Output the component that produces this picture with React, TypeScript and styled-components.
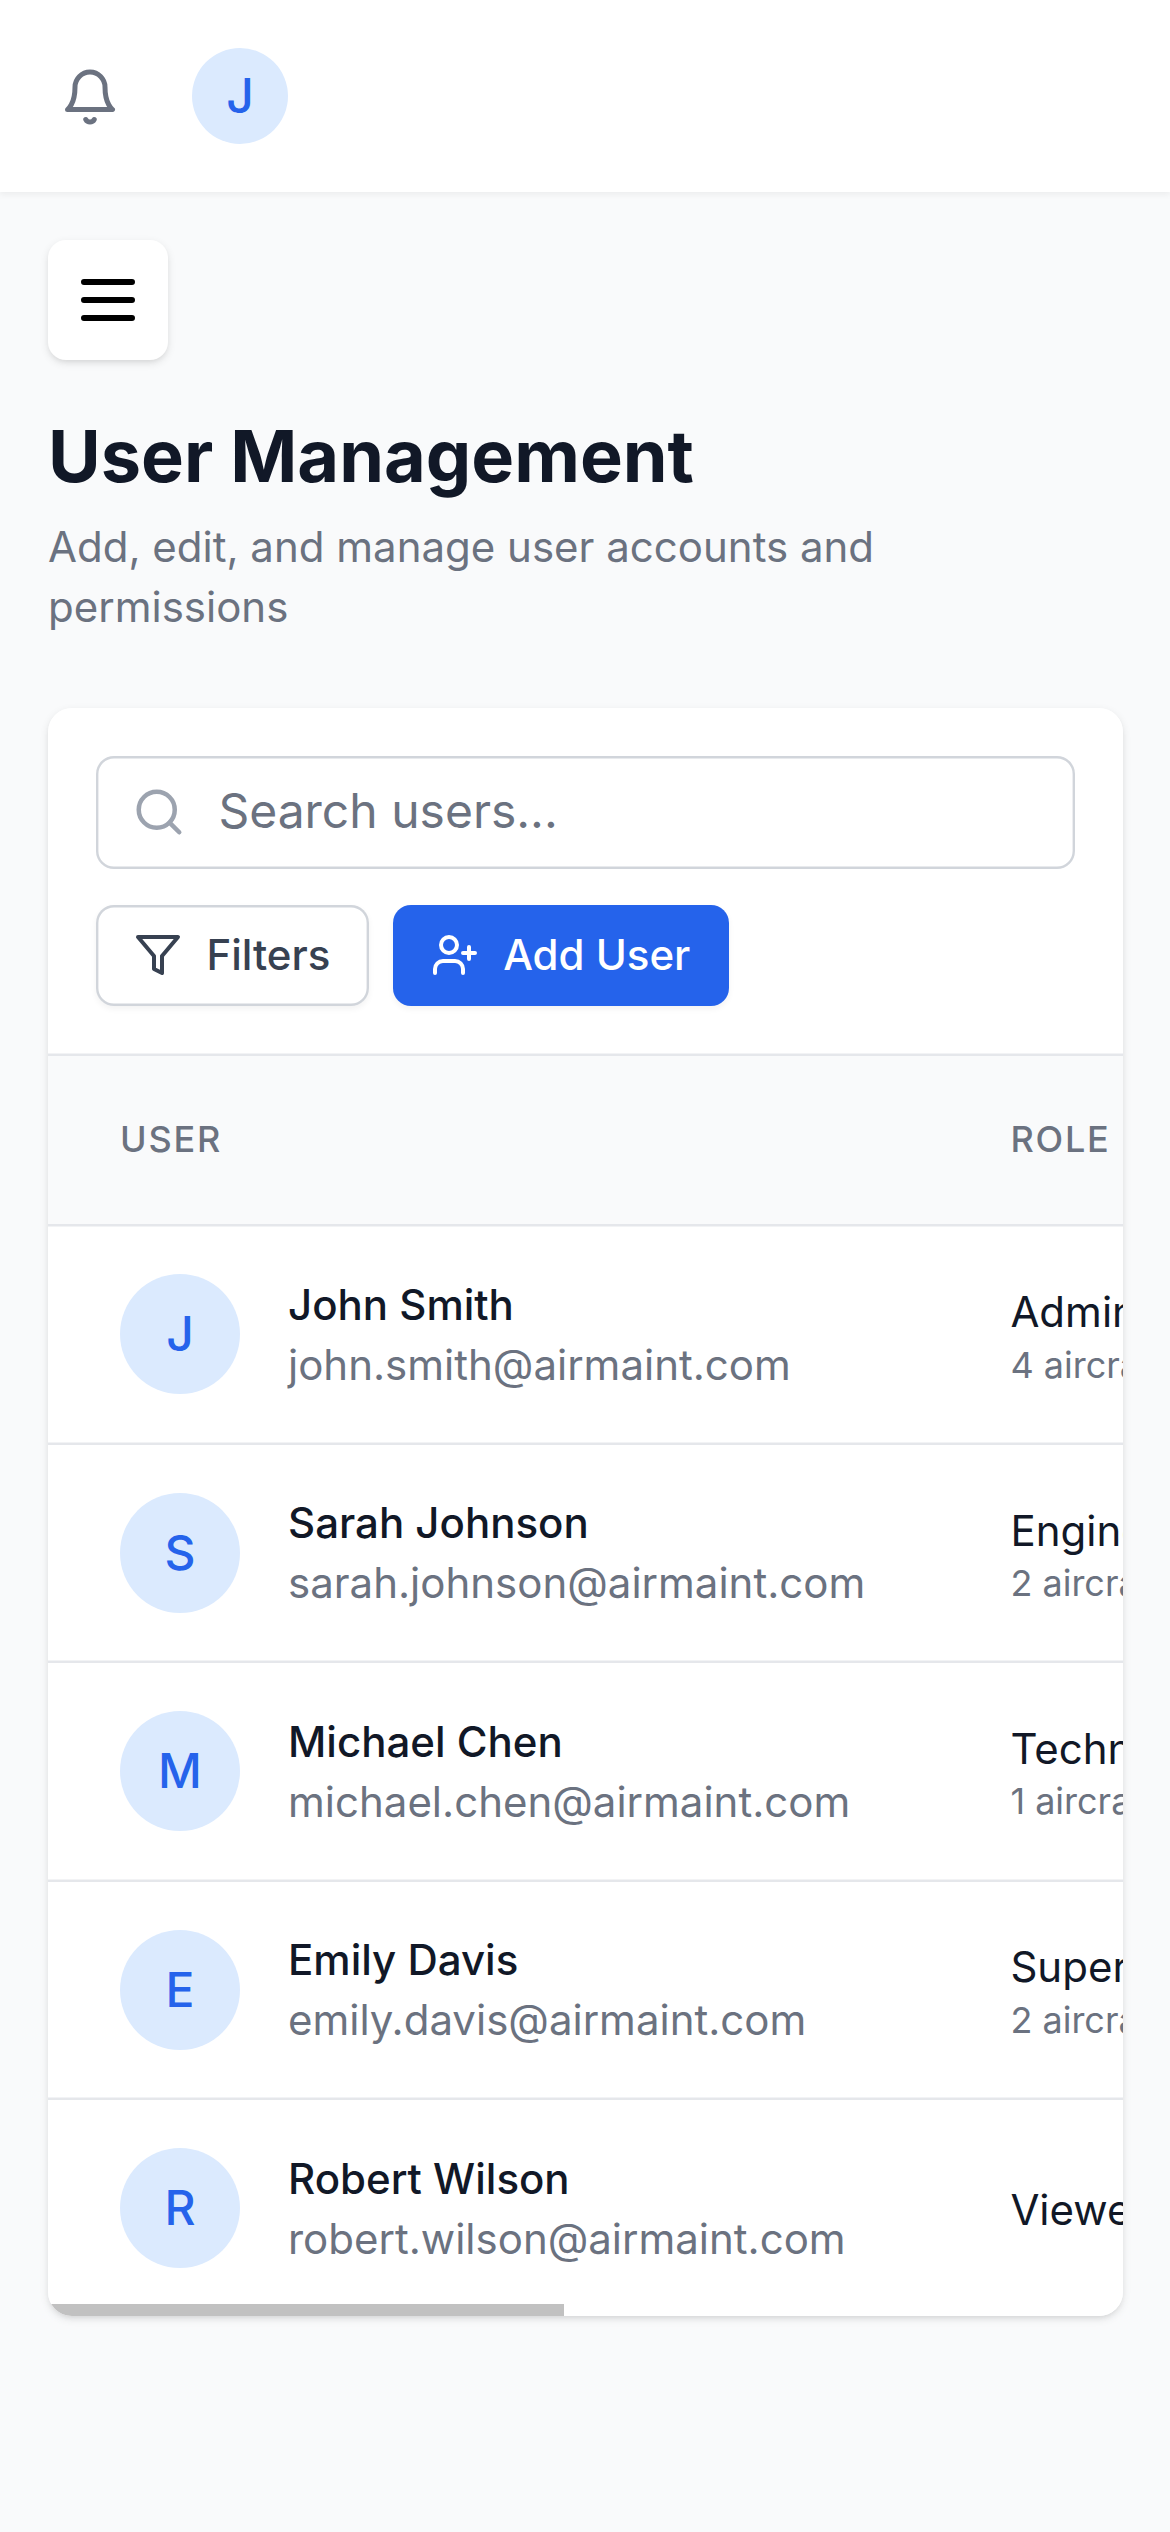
import React from "react";
import styled, { createGlobalStyle, css } from "styled-components";

const color = {
  page: "#f9fafb",
  white: "#ffffff",
  ink: "#111827",
  label: "#374151",
  muted: "#6b7280",
  faint: "#9ca3af",
  border: "#d1d5db",
  line: "#e5e7eb",
  blue: "#2563eb",
  blueSoft: "#dbeafe",
};

const hairline = "2.4px";

const GlobalStyle = createGlobalStyle`
  *, *::before, *::after { box-sizing: border-box; }
  body {
    margin: 0;
    background: ${color.page};
    color: ${color.ink};
    font-family: Inter, "Liberation Sans", sans-serif;
    font-size: 48px;
    line-height: 72px;
  }
  button, input { font: inherit; }
`;

const Page = styled.div`
  min-height: 2532px;
  overflow: hidden;
  background: ${color.page};
`;

const TopBar = styled.header`
  display: flex;
  align-items: center;
  gap: 60px;
  height: 192px;
  padding: 0 48px;
  background: ${color.white};
  box-shadow: 0 3px 6px rgba(0, 0, 0, 0.05);
`;

const IconButton = styled.button`
  display: flex;
  width: 84px;
  height: 84px;
  padding: 13.2px 12px 0;
  border: 0;
  background: transparent;
  color: ${color.muted};
`;

const Icon = styled.svg<{ $size: number }>`
  display: block;
  flex: none;
  width: ${(p) => p.$size}px;
  height: ${(p) => p.$size}px;
  fill: none;
  stroke: currentColor;
  stroke-width: 2;
  stroke-linecap: round;
  stroke-linejoin: round;
`;

const Avatar = styled.div<{ $size: number }>`
  display: flex;
  flex: none;
  align-items: center;
  justify-content: center;
  width: ${(p) => p.$size}px;
  height: ${(p) => p.$size}px;
  border-radius: 50%;
  background: ${color.blueSoft};
  color: ${color.blue};
  font-weight: 500;
`;

const Main = styled.main`
  width: 1171.2px;
  padding: 48px;
`;

const MenuButton = styled.button`
  display: flex;
  align-items: center;
  justify-content: center;
  width: 120px;
  height: 120px;
  padding: 0;
  border: 0;
  border-radius: 18px;
  background: ${color.white};
  color: #000000;
  box-shadow: 0 3px 9px rgba(0, 0, 0, 0.1), 0 3px 6px -3px rgba(0, 0, 0, 0.1);
`;

const Heading = styled.div`
  display: flex;
  flex-direction: column;
  gap: 13px;
  margin-top: 48px;
`;

const Title = styled.h1`
  margin: 0;
  font-size: 72px;
  font-weight: 700;
  line-height: 96px;
`;

const Subtitle = styled.p`
  margin: 0;
  color: ${color.muted};
  font-size: 42px;
  line-height: 60px;
`;

const Card = styled.section`
  position: relative;
  margin-top: 71px;
  border-radius: 24px;
  background: ${color.white};
  overflow: hidden;
`;

const CardShadow = styled.div`
  border-radius: 24px;
  box-shadow: 0 3px 9px rgba(0, 0, 0, 0.1), 0 3px 6px -3px rgba(0, 0, 0, 0.1);
`;

const Toolbar = styled.div`
  display: flex;
  flex-direction: column;
  gap: 36px;
  height: 348px;
  padding: 48px;
  box-shadow: inset 0 -${hairline} 0 ${color.line};
`;

const SearchField = styled.label`
  display: flex;
  flex: none;
  align-items: center;
  gap: 32.4px;
  height: 112.8px;
  padding: 0 36px;
  border-radius: 18px;
  box-shadow: inset 0 0 0 ${hairline} ${color.border};
  color: ${color.faint};
`;

const SearchInput = styled.input`
  flex: 1;
  min-width: 0;
  height: 72px;
  padding: 0 0 3px;
  border: 0;
  outline: 0;
  background: transparent;
  color: ${color.ink};
  &::placeholder {
    color: ${color.muted};
    opacity: 1;
  }
`;

const Actions = styled.div`
  display: flex;
  gap: 24px;
`;

const Button = styled.button<{ $primary?: boolean }>`
  display: flex;
  align-items: center;
  gap: 24px;
  height: 100.8px;
  padding: 0 38.4px;
  border: 0;
  border-radius: 18px;
  font-size: 42px;
  font-weight: 500;
  line-height: 48px;
  ${(p) =>
    p.$primary
      ? css`
          background: ${color.blue};
          color: ${color.white};
          box-shadow: 0 3px 6px rgba(0, 0, 0, 0.05);
        `
      : css`
          background: ${color.white};
          color: ${color.label};
          box-shadow: inset 0 0 0 ${hairline} ${color.border}, 0 3px 6px rgba(0, 0, 0, 0.05);
        `}
`;

const Row = styled.div<{ $edges?: string }>`
  display: grid;
  grid-template-columns: 890.4px 640px;
  align-items: center;
  height: 218.4px;
  box-shadow: ${(p) => p.$edges ?? "none"};
`;

const Cell = styled.div`
  padding: 0 72px;
  white-space: nowrap;
`;

const HeadRow = styled(Row)`
  height: 168px;
  padding-bottom: 2px;
  background: ${color.page};
  color: ${color.muted};
  font-size: 36px;
  font-weight: 500;
  line-height: 48px;
  letter-spacing: 1.8px;
  text-transform: uppercase;
`;

const RoleCell = styled(Cell)`
  padding-top: 3.6px;
`;

const Person = styled.div`
  display: flex;
  align-items: center;
  gap: 48px;
`;

const Identity = styled.div`
  padding-top: 1.2px;
`;

const Line = styled.div<{ $muted?: boolean; $strong?: boolean }>`
  color: ${(p) => (p.$muted ? color.muted : color.ink)};
  font-size: 42px;
  font-weight: ${(p) => (p.$strong ? 500 : 400)};
  line-height: 60px;
`;

const SmallLine = styled.div`
  margin: -1.6px 0 1.6px;
  color: ${color.muted};
  font-size: 36px;
  line-height: 48px;
`;

const Body = styled.div`
  height: 1092px;
  ${Row} {
    padding-bottom: ${hairline};
  }
  ${Row}:first-child {
    height: 220.8px;
    padding-top: ${hairline};
  }
  ${Row}:last-child {
    height: 216px;
    padding-bottom: 0;
  }
`;

const ScrollThumb = styled.div`
  position: absolute;
  left: 0;
  bottom: 0;
  width: 516px;
  height: 12px;
  background: #c1c1c1;
`;

const users = [
  { name: "John Smith", email: "john.smith@airmaint.com", role: "Administrator", aircraft: "4 aircraft types" },
  { name: "Sarah Johnson", email: "sarah.johnson@airmaint.com", role: "Engineer", aircraft: "2 aircraft types" },
  { name: "Michael Chen", email: "michael.chen@airmaint.com", role: "Technician", aircraft: "1 aircraft types" },
  { name: "Emily Davis", email: "emily.davis@airmaint.com", role: "Supervisor", aircraft: "2 aircraft types" },
  { name: "Robert Wilson", email: "robert.wilson@airmaint.com", role: "Viewer", aircraft: "" },
];

const bottomEdge = `inset 0 -${hairline} 0 ${color.line}`;
const topEdge = `inset 0 ${hairline} 0 ${color.line}`;

function rowEdges(index: number) {
  if (index === 0) return `${topEdge}, ${bottomEdge}`;
  return index === users.length - 1 ? "none" : bottomEdge;
}

export default function App() {
  return (
    <Page>
      <GlobalStyle />
      <TopBar>
        <IconButton aria-label="Notifications">
          <Icon $size={60} viewBox="0 0 24 24">
            <path d="M6 8a6 6 0 0 1 12 0c0 7 3 9 3 9H3s3-2 3-9" />
            <path d="M10.3 21a1.94 1.94 0 0 0 3.4 0" />
          </Icon>
        </IconButton>
        <Avatar $size={96}>J</Avatar>
      </TopBar>
      <Main>
        <MenuButton aria-label="Open menu">
          <Icon $size={72} viewBox="0 0 24 24">
            <path d="M4 6h16M4 12h16M4 18h16" />
          </Icon>
        </MenuButton>
        <Heading>
          <Title>User Management</Title>
          <Subtitle>Add, edit, and manage user accounts and permissions</Subtitle>
        </Heading>
        <CardShadow>
          <Card>
            <Toolbar>
              <SearchField>
                <Icon $size={54} viewBox="0 0 24 24">
                  <circle cx="11" cy="11" r="8" />
                  <path d="m21 21-4.3-4.3" />
                </Icon>
                <SearchInput type="text" placeholder="Search users..." />
              </SearchField>
              <Actions>
                <Button>
                  <Icon $size={48} viewBox="0 0 24 24">
                    <polygon points="22 3 2 3 10 12.46 10 19 14 21 14 12.46 22 3" />
                  </Icon>
                  Filters
                </Button>
                <Button $primary>
                  <Icon $size={48} viewBox="0 0 24 24">
                    <path d="M16 21v-2a4 4 0 0 0-4-4H6a4 4 0 0 0-4 4v2" />
                    <circle cx="9" cy="7" r="4" />
                    <path d="M19 8v6M22 11h-6" />
                  </Icon>
                  Add User
                </Button>
              </Actions>
            </Toolbar>
            <HeadRow>
              <Cell>User</Cell>
              <Cell>Role</Cell>
            </HeadRow>
            <Body>
              {users.map((user, index) => (
                <Row key={user.email} $edges={rowEdges(index)}>
                  <Cell>
                    <Person>
                      <Avatar $size={120}>{user.name[0]}</Avatar>
                      <Identity>
                        <Line $strong>{user.name}</Line>
                        <Line $muted>{user.email}</Line>
                      </Identity>
                    </Person>
                  </Cell>
                  <RoleCell>
                    <Line>{user.role}</Line>
                    {user.aircraft && <SmallLine>{user.aircraft}</SmallLine>}
                  </RoleCell>
                </Row>
              ))}
            </Body>
            <ScrollThumb />
          </Card>
        </CardShadow>
      </Main>
    </Page>
  );
}
